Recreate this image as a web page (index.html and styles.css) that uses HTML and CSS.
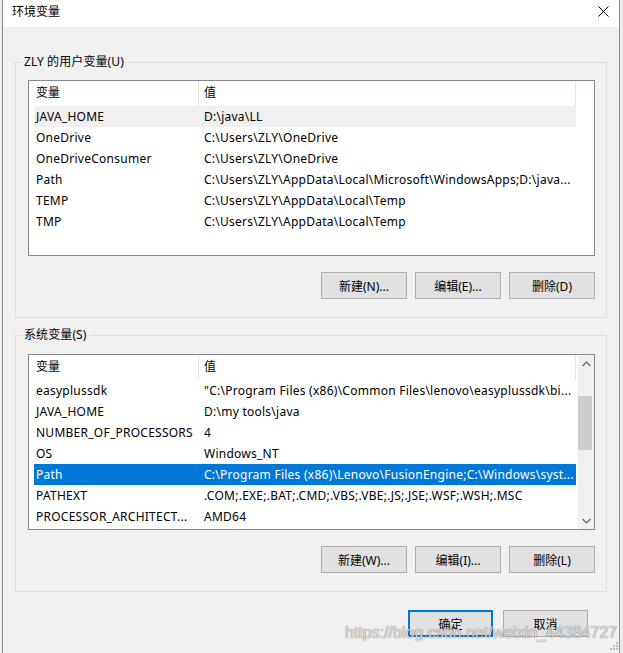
FILE: index.html
```html
<!DOCTYPE html>
<html lang="zh-CN">
<head>
<meta charset="utf-8">
<title>环境变量</title>
<link rel="stylesheet" href="styles.css">
</head>
<body>
<div class="window">
  <div class="titlebar">
    <span class="title">环境变量</span>
    <svg class="close" width="11" height="11" viewBox="0 0 11 11"><path d="M0.5 0.5 L10.5 10.5 M10.5 0.5 L0.5 10.5" stroke="#000" stroke-width="1" fill="none"/></svg>
  </div>
  <div class="body">
    <fieldset class="group group-user">
      <legend>ZLY 的用户变量(U)</legend>
      <div class="listview">
        <div class="lv-main">
          <div class="lv-header"><div class="hc c1">变量</div><div class="hc c2">值</div></div>
          <div class="row inactive"><span class="c1">JAVA_HOME</span><span class="c2">D:\java\LL</span></div>
          <div class="row"><span class="c1">OneDrive</span><span class="c2">C:\Users\ZLY\OneDrive</span></div>
          <div class="row"><span class="c1">OneDriveConsumer</span><span class="c2">C:\Users\ZLY\OneDrive</span></div>
          <div class="row"><span class="c1">Path</span><span class="c2">C:\Users\ZLY\AppData\Local\Microsoft\WindowsApps;D:\java...</span></div>
          <div class="row"><span class="c1">TEMP</span><span class="c2">C:\Users\ZLY\AppData\Local\Temp</span></div>
          <div class="row"><span class="c1">TMP</span><span class="c2">C:\Users\ZLY\AppData\Local\Temp</span></div>
        </div>
      </div>
      <div class="btnrow">
        <button class="btn">新建(N)...</button>
        <button class="btn">编辑(E)...</button>
        <button class="btn">删除(D)</button>
      </div>
    </fieldset>

    <fieldset class="group group-sys">
      <legend>系统变量(S)</legend>
      <div class="listview">
        <div class="lv-main">
          <div class="lv-header"><div class="hc c1">变量</div><div class="hc c2">值</div></div>
          <div class="row"><span class="c1">easyplussdk</span><span class="c2">"C:\Program Files (x86)\Common Files\lenovo\easyplussdk\bi...</span></div>
          <div class="row"><span class="c1">JAVA_HOME</span><span class="c2">D:\my tools\java</span></div>
          <div class="row"><span class="c1">NUMBER_OF_PROCESSORS</span><span class="c2">4</span></div>
          <div class="row"><span class="c1">OS</span><span class="c2">Windows_NT</span></div>
          <div class="row selected"><span class="c1">Path</span><span class="c2">C:\Program Files (x86)\Lenovo\FusionEngine;C:\Windows\syst...</span></div>
          <div class="row"><span class="c1">PATHEXT</span><span class="c2">.COM;.EXE;.BAT;.CMD;.VBS;.VBE;.JS;.JSE;.WSF;.WSH;.MSC</span></div>
          <div class="row"><span class="c1">PROCESSOR_ARCHITECT...</span><span class="c2">AMD64</span></div>
        </div>
        <div class="vscroll">
          <div class="arrow"><svg width="9" height="6" viewBox="0 0 9 6"><path d="M0.5 5 L4.5 1 L8.5 5" stroke="#606060" stroke-width="1.2" fill="none"/></svg></div>
          <div class="track"><div class="thumb"></div></div>
          <div class="arrow"><svg width="9" height="6" viewBox="0 0 9 6"><path d="M0.5 1 L4.5 5 L8.5 1" stroke="#606060" stroke-width="1.2" fill="none"/></svg></div>
        </div>
      </div>
      <div class="btnrow">
        <button class="btn">新建(W)...</button>
        <button class="btn">编辑(I)...</button>
        <button class="btn">删除(L)</button>
      </div>
    </fieldset>

    <div class="footer">
      <button class="btn btn-default">确定</button>
      <button class="btn">取消</button>
    </div>
  </div>
  <div class="watermark">https://blog.csdn.net/weixin_44384727</div>
  <svg class="grip" width="8" height="8" viewBox="0 0 8 8">
    <rect x="6" y="0" width="2" height="2" fill="#bcbcbc"/>
    <rect x="3" y="3" width="2" height="2" fill="#bcbcbc"/>
    <rect x="6" y="3" width="2" height="2" fill="#bcbcbc"/>
    <rect x="0" y="6" width="2" height="2" fill="#bcbcbc"/>
    <rect x="3" y="6" width="2" height="2" fill="#bcbcbc"/>
    <rect x="6" y="6" width="2" height="2" fill="#bcbcbc"/>
  </svg>
</div>
</body>
</html>
```
FILE: styles.css
```css
html, body {
  margin: 0;
  padding: 0;
  height: 100%;
  overflow: hidden;
  background: #ececec;
}

body {
  font-family: "Noto Sans", "Noto Sans CJK SC", sans-serif;
  font-size: 12px;
  color: #000;
}

.window {
  position: relative;
  margin-left: 2px;
  width: 616px;
  min-height: 100%;
  border-left: 1px solid #8e8e8e;
  border-right: 1px solid #8e8e8e;
  background: #f0f0f0;
}

.titlebar {
  height: 27px;
  background: #fff;
  display: flex;
  align-items: flex-start;
  justify-content: space-between;
}

.title {
  padding-left: 9px;
  line-height: 24px;
  font-size: 12px;
}

.close {
  margin-top: 6px;
  margin-right: 10px;
}

.body {
  padding: 27px 12px 0 12px;
}

.group {
  margin: 0;
  min-width: 0;
  border: 1px solid #dcdcdc;
  padding: 10px 11px 18px 12px;
}

.group legend {
  margin-left: -6px;
  padding: 0 2px;
  line-height: 16px;
  font-size: 12px;
  letter-spacing: 0.1px;
}

.group-sys {
  margin-top: 9px;
  padding-top: 11px;
}

.listview {
  height: 176px;
  box-sizing: border-box;
  border: 1px solid #828790;
  background: #fff;
  display: flex;
  overflow: hidden;
}

.lv-main {
  width: 548px;
  flex: none;
}

.lv-header {
  display: flex;
  height: 25px;
}

.hc {
  box-sizing: border-box;
  border-right: 1px solid #e5e5e5;
  line-height: 24px;
}

.hc.c1 {
  width: 170px;
  padding-left: 7px;
}

.hc.c2 {
  width: 377px;
  padding-left: 5px;
}

.row {
  display: flex;
  margin-left: 5px;
  width: 542px;
  height: 21px;
  line-height: 21px;
  white-space: nowrap;
  letter-spacing: 0.25px;
}

.row .c1 {
  width: 165px;
  box-sizing: border-box;
  padding-left: 2px;
  overflow: hidden;
}

.row .c2 {
  width: 377px;
  box-sizing: border-box;
  padding-left: 5px;
  overflow: hidden;
}

.row.inactive {
  background: #f0f0f0;
}

.row.selected {
  background: #0078d7;
  color: #fff;
}

.vscroll {
  margin-left: 1px;
  width: 17px;
  background: #f0f0f0;
  display: flex;
  flex-direction: column;
}

.arrow {
  height: 17px;
  display: flex;
  align-items: center;
  justify-content: center;
}

.track {
  flex: 1;
  padding-top: 24px;
}

.thumb {
  margin: 0 2px 0 0;
  height: 54px;
  background: #cdcdcd;
}

.btnrow {
  margin-top: 16px;
  display: flex;
  justify-content: flex-end;
  gap: 8px;
}

.btn {
  width: 86px;
  height: 27px;
  box-sizing: border-box;
  border: 1px solid #adadad;
  background: #e1e1e1;
  font-family: "Noto Sans", "Noto Sans CJK SC", sans-serif;
  font-size: 12px;
  color: #000;
  padding: 0;
  margin: 0;
}

.footer {
  margin-top: 18px;
  display: flex;
  justify-content: flex-end;
  gap: 10px;
  padding-right: 19px;
}

.footer .btn {
  width: 85px;
}

.btn-default {
  border: 2px solid #0078d7;
}

.watermark {
  position: absolute;
  left: 342px;
  top: 624px;
  font-family: "Liberation Sans", sans-serif;
  font-size: 16px;
  color: rgba(255, 255, 255, 0.8);
  text-shadow: 0 0 1px rgba(0, 0, 0, 0.55), 0 0 1px rgba(0, 0, 0, 0.3);
  white-space: nowrap;
  pointer-events: none;
}

.grip {
  position: absolute;
  left: 607px;
  top: 642px;
}
```
